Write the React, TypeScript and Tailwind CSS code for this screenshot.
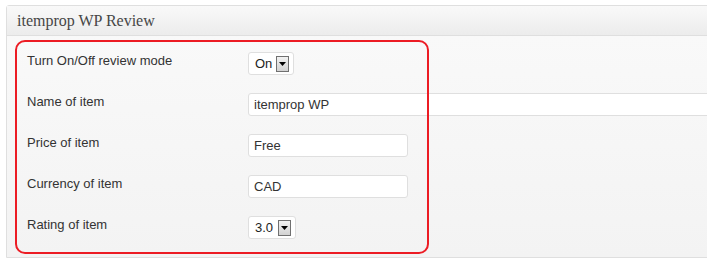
import React from "react";

function Select({ value, width }: { value: string; width: string }) {
  return (
    <div
      className={`flex h-[23px] ${width} items-center justify-between rounded-[3px] border border-[#dfdfdf] bg-white pl-[6px] pr-[4px]`}
    >
      <span className="text-[13px] leading-none text-[#222]">{value}</span>
      <div className="flex h-[16px] w-[13px] items-center justify-center border border-[#707070] bg-gradient-to-b from-[#f2f2f2] to-[#d2d2d2]">
        <svg width="7" height="4" viewBox="0 0 7 4">
          <path d="M0 0 H7 L3.5 4 Z" fill="#000" />
        </svg>
      </div>
    </div>
  );
}

function Input({ value, width }: { value: string; width: string }) {
  return (
    <div
      className={`flex h-[23px] ${width} shrink-0 items-center rounded-[3px] border border-[#dfdfdf] bg-white pl-[5px]`}
    >
      <span className="text-[13px] leading-none text-[#333]">{value}</span>
    </div>
  );
}

function Row({ label, children }: { label: string; children: React.ReactNode }) {
  return (
    <div className="flex h-[41px] items-start py-[9px]">
      <div className="w-[241px] shrink-0 pl-[20px] pt-[1px] text-[13px] leading-[16px] text-[#333]">
        {label}
      </div>
      {children}
    </div>
  );
}

export default function App() {
  return (
    <div
      className="relative h-[266px] w-[707px] overflow-hidden bg-white"
      style={{ fontFamily: '"Liberation Sans", Arial, sans-serif' }}
    >
      <div className="ml-[6px] mt-[5px] w-[720px] rounded-tl-[3px] border border-[#dfdfdf]">
        <div className="flex h-[30px] items-center border-b border-[#dfdfdf] bg-gradient-to-b from-[#f9f9f9] to-[#ececec] pl-[10px]">
          <span
            className="text-[16px] leading-none text-[#464646]"
            style={{ fontFamily: '"Liberation Serif", Georgia, serif' }}
          >
            itemprop WP Review
          </span>
        </div>
        <div className="bg-gradient-to-b from-[#f9f9f9] to-[#f3f3f3] pb-[9px] pt-[7px]">
          <Row label="Turn On/Off review mode">
            <Select value="On" width="w-[46px]" />
          </Row>
          <Row label="Name of item">
            <Input value="itemprop WP" width="w-[480px]" />
          </Row>
          <Row label="Price of item">
            <Input value="Free" width="w-[160px]" />
          </Row>
          <Row label="Currency of item">
            <Input value="CAD" width="w-[160px]" />
          </Row>
          <Row label="Rating of item">
            <Select value="3.0" width="w-[48px]" />
          </Row>
        </div>
      </div>
      <div className="pointer-events-none absolute left-[15px] top-[40px] h-[214px] w-[414px] rounded-[10px] border-2 border-[#ec1c24]" />
    </div>
  );
}
